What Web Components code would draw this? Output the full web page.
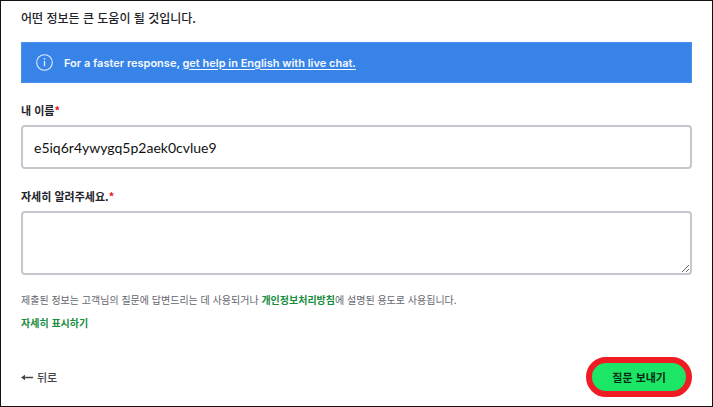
<!DOCTYPE html>
<html lang="ko">
<head>
<meta charset="utf-8">
<meta name="viewport" content="width=device-width, initial-scale=1">
<title>문의하기</title>
<style>
  html { height: 100%; }
  body {
    margin: 0;
    min-height: 100%;
    display: flex;
    background: #fff;
    color: #23232a;
    font-family: "Noto Sans CJK KR", sans-serif;
  }
</style>
</head>
<body>
<contact-form></contact-form>

<script>
  class InfoBanner extends HTMLElement {
    constructor() {
      super();
      this.attachShadow({ mode: 'open' }).innerHTML = `
        <style>
          :host {
            display: flex; align-items: center; gap: 11px;
            box-sizing: border-box; min-height: 41px; padding: 0 14px;
            background: #3783e8; color: #f4f9ff;
            border: 1px solid #4b91ee;
            font: 600 11px/16px Inter, sans-serif;
          }
          svg { flex: none; display: block; }
        </style>
        <svg width="17" height="17" viewBox="0 0 17 17" fill="none" stroke="#e2eefd" aria-hidden="true">
          <circle cx="8.5" cy="8.5" r="7.8" stroke-width="1.1"/>
          <path d="M8.5 7v5.3" stroke-width="1.3"/>
          <circle cx="8.5" cy="4.9" r=".8" fill="#e2eefd" stroke="none"/>
        </svg>
        <span><slot></slot></span>`;
    }
  }
  customElements.define('info-banner', InfoBanner);

  class TextField extends HTMLElement {
    constructor() {
      super();
      const multi = this.hasAttribute('multiline');
      this.attachShadow({ mode: 'open' }).innerHTML = `
        <style>
          :host { display: flex; flex-direction: column; gap: 7px; }
          label { font-size: 11px; font-weight: 700; line-height: 16px; }
          .mark { color: #e91429; }
          input, textarea {
            display: block; box-sizing: border-box; width: 100%; margin: 0;
            border: 2px solid #c6c6cf; border-radius: 4px;
            background: #fff; color: #111; outline: 0;
            font: 400 14px/20px "Century Gothic", "Lato", sans-serif;
          }
          input { height: 44px; padding: 0 11px; }
          textarea { height: 64px; padding: 8px 11px; resize: vertical; }
        </style>
        <label for="control"><slot></slot><span class="mark">*</span></label>
        ${multi ? '<textarea id="control" required></textarea>' : '<input id="control" type="text" required>'}`;
      this.shadowRoot.getElementById('control').value = this.getAttribute('value') || '';
    }
  }
  customElements.define('text-field', TextField);

  class BackButton extends HTMLElement {
    constructor() {
      super();
      this.attachShadow({ mode: 'open' }).innerHTML = `
        <style>
          :host { display: block; }
          button {
            display: flex; align-items: center; gap: 4px; padding: 0;
            border: 0; background: none; color: #45454d; cursor: pointer;
            font: 500 11px/16px "Noto Sans CJK KR", sans-serif;
          }
          svg { display: block; }
        </style>
        <button type="button">
          <svg width="12" height="8" viewBox="0 0 12 8" aria-hidden="true">
            <path d="M2 4.5h10" stroke="#45454d" stroke-width="1.5"/>
            <path d="M0 4.5 4 1.8v5.4z" fill="#45454d"/>
          </svg>
          <slot></slot>
        </button>`;
    }
  }
  customElements.define('back-button', BackButton);

  class SendButton extends HTMLElement {
    constructor() {
      super();
      this.attachShadow({ mode: 'open' }).innerHTML = `
        <style>
          :host { display: block; }
          button {
            display: block; height: 40px; padding: 0 20px; cursor: pointer;
            border: 6px solid #ef1c24; border-radius: 20px;
            background: #1ce666; color: #062b12;
            font: 700 11px/16px "Noto Sans CJK KR", sans-serif;
          }
        </style>
        <button type="submit"><slot></slot></button>`;
    }
  }
  customElements.define('send-button', SendButton);

  class ContactForm extends HTMLElement {
    constructor() {
      super();
      this.attachShadow({ mode: 'open' }).innerHTML = `
        <style>
          :host {
            display: block; flex: 1; box-sizing: border-box;
            padding: 6px 20px 8px; border: 1px solid #111;
          }
          p { margin: 0; }
          .intro { font-size: 12px; font-weight: 500; line-height: 22px; }
          info-banner { margin-top: 13px; }
          .banner-link { color: inherit; text-underline-offset: 2px; }
          .name { margin-top: 19px; }
          .details { margin-top: 19px; }
          .notice { margin-top: 17px; font-size: 10px; line-height: 16px; color: #65656e; }
          .green { color: #168c3c; font-weight: 700; text-decoration: none; }
          .more { margin-top: 7px; font-size: 10px; line-height: 16px; }
          footer { display: flex; justify-content: space-between; align-items: center; margin-top: 26px; }
        </style>
        <form>
          <p class="intro">어떤 정보든 큰 도움이 될 것입니다.</p>
          <info-banner><span>For a faster response, <a class="banner-link" href="#chat">get help in English with live chat.</a></span></info-banner>
          <text-field class="name" value="e5iq6r4ywygq5p2aek0cvlue9">내 이름</text-field>
          <text-field class="details" multiline>자세히 알려주세요.</text-field>
          <p class="notice">제출된 정보는 고객님의 질문에 답변드리는 데 사용되거나 <a class="green" href="#privacy">개인정보처리방침</a>에 설명된 용도로 사용됩니다.</p>
          <p class="more"><a class="green" href="#more">자세히 표시하기</a></p>
          <footer>
            <back-button>뒤로</back-button>
            <send-button>질문 보내기</send-button>
          </footer>
        </form>`;
    }
  }
  customElements.define('contact-form', ContactForm);
</script>
</body>
</html>
